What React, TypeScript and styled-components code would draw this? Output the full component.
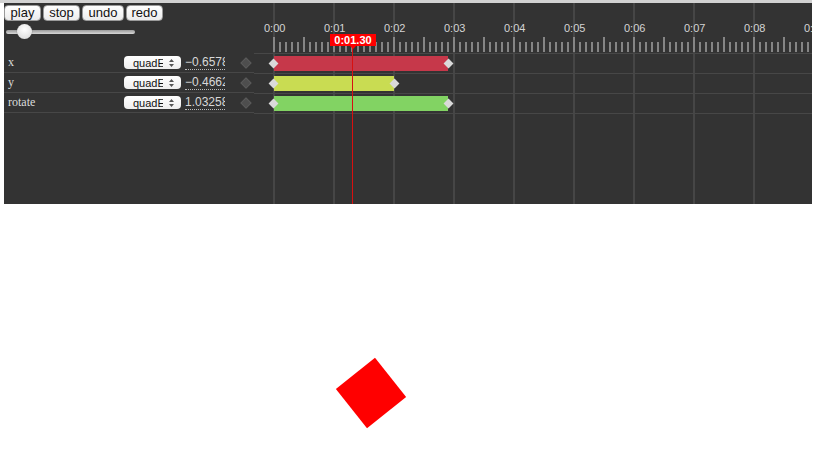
import React from 'react';
import styled, { createGlobalStyle } from 'styled-components';

const GlobalStyle = createGlobalStyle`
  body {
    margin: 0;
    background: #fff;
    font-family: "Liberation Sans", Arial, sans-serif;
  }
`;

const SECOND = 60;
const ORIGIN = 20;

const TopStrip = styled.div`
  width: 812px;
  height: 3px;
  background: #d2d2d2;
`;

const Panel = styled.div`
  margin-left: 4px;
  width: 808px;
  height: 201px;
  background: #333;
  display: grid;
  grid-template-columns: 250px 558px;
  overflow: hidden;
`;

const Side = styled.div`
  display: flex;
  flex-direction: column;
`;

const Controls = styled.div`
  height: 50px;
  padding-top: 2px;
  box-sizing: border-box;
`;

const ButtonBar = styled.div`
  display: flex;
  gap: 2px;
`;

const Button = styled.button<{ $w: number }>`
  width: ${p => p.$w}px;
  height: 16px;
  padding: 0;
  border: 1px solid #9a9a9a;
  border-radius: 4px;
  background: linear-gradient(#ffffff, #ececec);
  font-family: "Liberation Sans", Arial, sans-serif;
  font-size: 13px;
  line-height: 14px;
  color: #111;
`;

const Slider = styled.div`
  position: relative;
  margin: 9px 0 0 2px;
  width: 129px;
  height: 4px;
  border-radius: 2px;
  background: linear-gradient(#9b9b9b, #d8d8d8);
`;

const Thumb = styled.div`
  position: absolute;
  left: 11px;
  top: -6px;
  width: 15px;
  height: 15px;
  border-radius: 50%;
  background: radial-gradient(circle at 50% 35%, #ffffff, #d6d6d6);
  box-shadow: 0 0 1px #555;
`;

const PropRow = styled.div`
  height: 19px;
  border-bottom: 1px solid #474747;
  display: flex;
  align-items: center;
  padding-left: 4px;
  &:first-of-type {
    margin-top: 1px;
  }
`;

const PropName = styled.span`
  width: 116px;
  font-family: "Liberation Serif", "Times New Roman", serif;
  font-size: 12px;
  color: #dcdcdc;
`;

const Select = styled.div`
  width: 57px;
  height: 13px;
  box-sizing: border-box;
  background: linear-gradient(#ffffff, #eeeeee);
  border-radius: 4px;
  display: flex;
  align-items: center;
  padding: 0 5px 0 9px;
  font-size: 11px;
  color: #111;
  gap: 6px;
`;

const SelectText = styled.span`
  width: 30px;
  overflow: hidden;
  white-space: nowrap;
`;

const Value = styled.span`
  margin-left: 4px;
  width: 40px;
  overflow: hidden;
  white-space: nowrap;
  font-size: 12px;
  line-height: 13px;
  color: #d8d8d8;
  border-bottom: 1px dotted #bbb;
`;

const KeyButton = styled.span`
  margin-left: 17px;
  width: 6px;
  height: 6px;
  background: #4e4e4e;
  border: 1px solid #5a5a5a;
  transform: rotate(45deg);
`;

const Timeline = styled.div`
  position: relative;
  background-image: linear-gradient(to right, #464646 2px, transparent 2px);
  background-size: ${SECOND}px 100%;
  background-position: ${ORIGIN - 1}px 0;
`;

const Header = styled.div`
  height: 50px;
  border-bottom: 1px solid #474747;
  position: relative;
`;

const Labels = styled.div`
  display: flex;
  padding-left: ${ORIGIN}px;
  padding-top: 19px;
`;

const Label = styled.span`
  flex: 0 0 ${SECOND}px;
  font-size: 11px;
  color: #d4d4d4;
  transform: translateX(-10px);
`;

const Ruler = styled.svg`
  display: block;
  margin-top: 3px;
`;

const Track = styled.div`
  height: 19px;
  border-bottom: 1px solid #474747;
  padding-left: ${ORIGIN}px;
  display: flex;
  align-items: center;
`;

const Bar = styled.div<{ $color: string; $len: number }>`
  position: relative;
  width: ${p => p.$len * SECOND}px;
  height: 15px;
  background: ${p => p.$color};
`;

const Key = styled.span<{ $end?: boolean }>`
  position: absolute;
  top: 4px;
  ${p => (p.$end ? 'right: -4px;' : 'left: -4px;')}
  width: 7px;
  height: 7px;
  background: #dadada;
  transform: rotate(45deg);
`;

const Playhead = styled.div<{ $t: number }>`
  position: absolute;
  top: 31px;
  bottom: 0;
  left: ${p => ORIGIN + p.$t * SECOND}px;
  width: 1px;
  background: #d81010;
`;

const Stamp = styled.div`
  position: absolute;
  top: 0;
  left: -22px;
  width: 46px;
  height: 12px;
  background: #ff0000;
  color: #fff;
  font-size: 11px;
  font-weight: bold;
  line-height: 12px;
  text-align: center;
  &::after {
    content: '';
    position: absolute;
    left: 20px;
    top: 12px;
    border: 3px solid transparent;
    border-top-color: #ff0000;
  }
`;

const Stage = styled.div`
  position: relative;
  height: 246px;
`;

const Box = styled.div`
  position: absolute;
  left: 346px;
  top: 164px;
  width: 50px;
  height: 50px;
  background: #ff0000;
  transform: rotate(51.5deg);
`;

const props = [
  { name: 'x', value: '\u22120.65783', color: '#c6384a', len: 2.9 },
  { name: 'y', value: '\u22120.46621', color: '#c9dc52', len: 2 },
  { name: 'rotate', value: '1.03258', color: '#82d363', len: 2.9 },
];

const seconds = Array.from({ length: 10 }, (_, i) => `0:0${i}`);

const Arrows = () => (
  <svg width="5" height="8" viewBox="0 0 5 8">
    <path d="M2.5 0 L5 3 H0 Z M2.5 8 L5 5 H0 Z" fill="#555" />
  </svg>
);

export default function App() {
  const ticks = Array.from({ length: 92 }, (_, i) => i);
  return (
    <>
      <GlobalStyle />
      <TopStrip />
      <Panel>
        <Side>
          <Controls>
            <ButtonBar>
              <Button $w={37}>play</Button>
              <Button $w={37}>stop</Button>
              <Button $w={42}>undo</Button>
              <Button $w={37}>redo</Button>
            </ButtonBar>
            <Slider>
              <Thumb />
            </Slider>
          </Controls>
          {props.map(p => (
            <PropRow key={p.name}>
              <PropName>{p.name}</PropName>
              <Select>
                <SelectText>quadEaseIn</SelectText>
                <Arrows />
              </Select>
              <Value>{p.value}</Value>
              <KeyButton />
            </PropRow>
          ))}
        </Side>
        <Timeline>
          <Header>
            <Labels>
              {seconds.map(s => (
                <Label key={s}>{s}</Label>
              ))}
            </Labels>
            <Ruler width="558" height="15">
              {ticks.map(i => (
                <rect
                  key={i}
                  x={ORIGIN - 1 + i * 6}
                  y={i % 5 === 0 ? 0 : 5}
                  width="2"
                  height={i % 5 === 0 ? 15 : 10}
                  fill="#858585"
                />
              ))}
            </Ruler>
          </Header>
          {props.map(p => (
            <Track key={p.name}>
              <Bar $color={p.color} $len={p.len}>
                <Key />
                <Key $end />
              </Bar>
            </Track>
          ))}
          <Playhead $t={1.3}>
            <Stamp>0:01.30</Stamp>
          </Playhead>
        </Timeline>
      </Panel>
      <Stage>
        <Box />
      </Stage>
    </>
  );
}
